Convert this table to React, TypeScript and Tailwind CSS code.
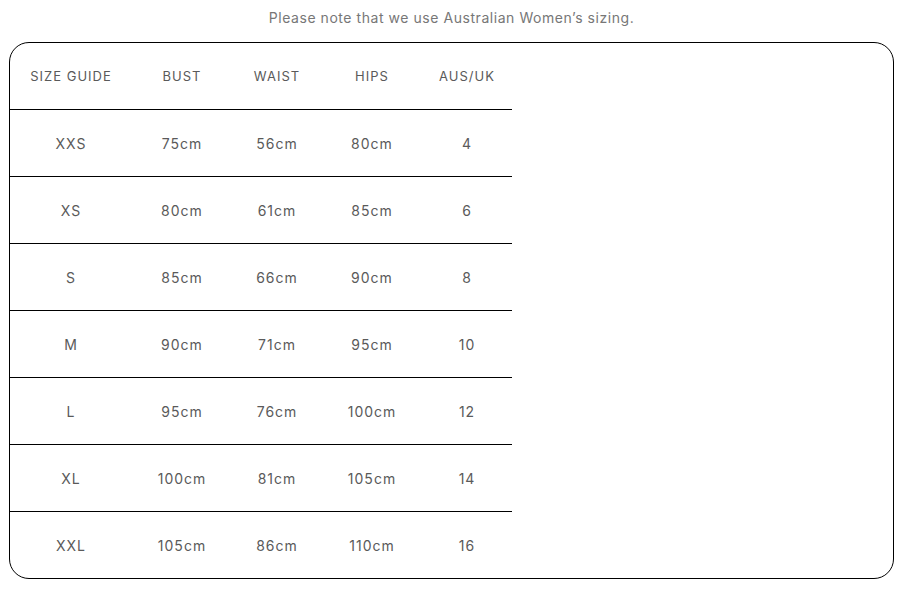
import React from "react";

const rows = [
  ["XXS", "75cm", "56cm", "80cm", "4"],
  ["XS", "80cm", "61cm", "85cm", "6"],
  ["S", "85cm", "66cm", "90cm", "8"],
  ["M", "90cm", "71cm", "95cm", "10"],
  ["L", "95cm", "76cm", "100cm", "12"],
  ["XL", "100cm", "81cm", "105cm", "14"],
  ["XXL", "105cm", "86cm", "110cm", "16"],
];
const headers = ["SIZE GUIDE", "BUST", "WAIST", "HIPS", "AUS/UK"];
const widths = ["w-[122px]", "w-[100px]", "w-[90px]", "w-[100px]", "w-[90px]"];

export default function App() {
  return (
    <div className="w-[920px] h-[599px] bg-white" style={{ fontFamily: "Inter, 'Noto Sans', sans-serif" }}>
      <div className="ml-[9px] w-[885px] h-[34px] flex items-center justify-center text-[14px] text-[#777777] tracking-[0.55px]">
        Please note that we use Australian Women’s sizing.
      </div>
      <div className="mt-[8px] ml-[9px] w-[885px] h-[537px] border border-black rounded-[20px] overflow-hidden">
        <div className="w-[502px]">
          <div className="h-[66px] pt-[2px] flex items-center text-[13px] tracking-[1px] text-[#5a5a5a]">
            {headers.map((h, i) => (
              <div key={h} className={`${widths[i]} text-center`}>{h}</div>
            ))}
          </div>
          {rows.map((r) => (
            <div key={r[0]} className="h-[67px] border-t border-black flex items-center text-[14px] tracking-[1px] text-[#5a5a5a]">
              {r.map((c, i) => (
                <div key={i} className={`${widths[i]} text-center`}>{c}</div>
              ))}
            </div>
          ))}
        </div>
      </div>
    </div>
  );
}
